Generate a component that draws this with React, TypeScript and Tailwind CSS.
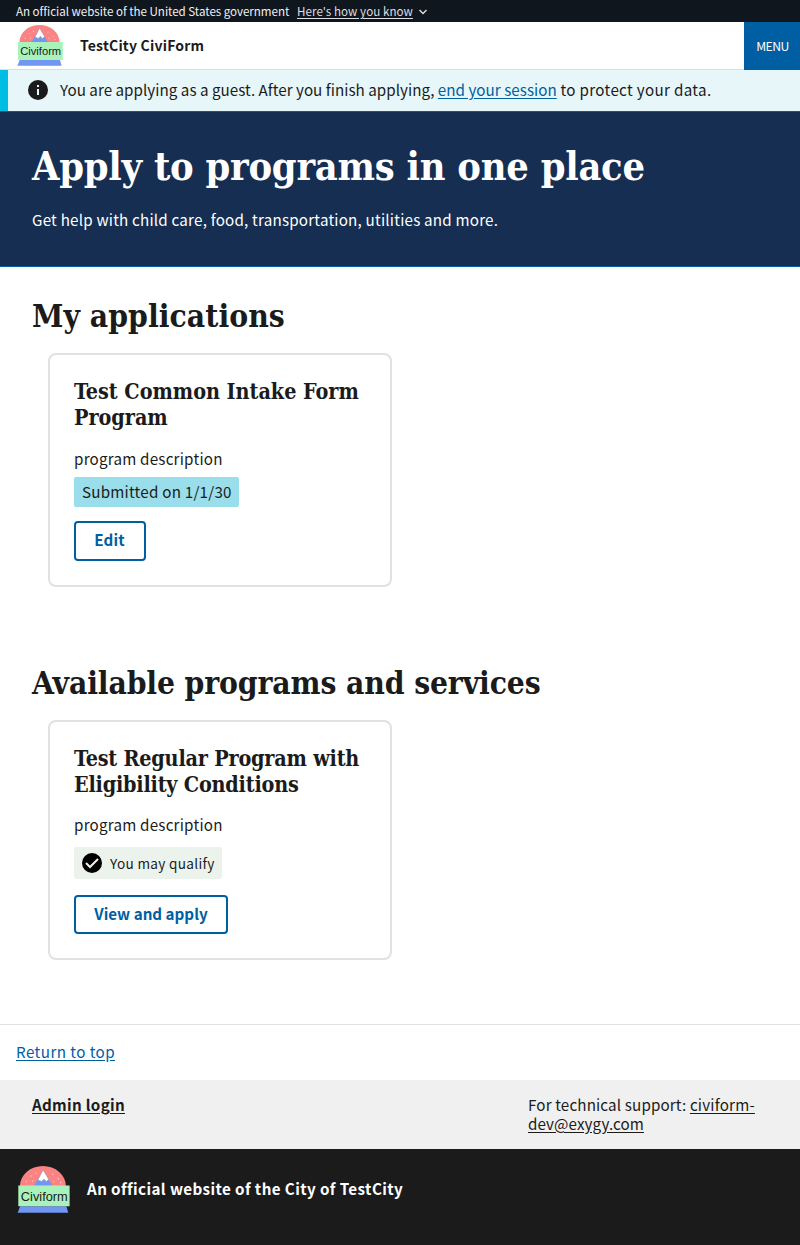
import React from "react";

type LogoProps = { className: string };

function Logo({ className }: LogoProps) {
  return (
    <svg className={className} viewBox="0 0 48 44" role="img" aria-label="Civiform">
      <path d="M3.4 18.5A20 17.5 0 0 1 43.6 18.5Z" fill="#fb8383" />
      <path d="M15.5 18.2 23.6 4.8l8.2 13.4Z" fill="#7297f2" />
      <path d="m23.6 4.3 4.9 8.2-2 1.9-2.3-2.1-1.7 2.2-2-.9-1.4-.6Z" fill="#fff" stroke="#9a8a9a" strokeWidth=".4" />
      <g fill="#fdd3d3">
        <circle cx="13" cy="9.5" r=".6" />
        <circle cx="17.5" cy="7.3" r=".6" />
        <circle cx="9" cy="14.5" r=".6" />
        <circle cx="14.5" cy="14" r=".6" />
        <circle cx="32" cy="8" r=".6" />
        <circle cx="37" cy="12" r=".6" />
        <circle cx="33" cy="14.5" r=".6" />
        <circle cx="39" cy="15.5" r=".6" />
      </g>
      <path d="M3.6 36h40.4l1.6 5.7H1.4Z" fill="#7297f2" />
      <path d="M2 18h44.8v18H2Z" fill="#a9f3bb" />
      <text x="4.2" y="31.3" fontFamily="'Liberation Sans', sans-serif" fontSize="11" textLength="41" lengthAdjust="spacingAndGlyphs" fill="#1b1b1b">
        Civiform
      </text>
    </svg>
  );
}

type CardProps = {
  title: string[];
  children: React.ReactNode;
  className: string;
  titleClass: string;
  descriptionClass: string;
};

function ProgramCard({ title, children, className, titleClass, descriptionClass }: CardProps) {
  return (
    <article className={`ml-4 w-[344px] rounded-lg border-2 border-[#dfe1e2] px-6 ${className}`}>
      <h3 className={`pt-6 font-['DejaVu_Serif_Condensed','DejaVu_Serif',serif] text-[21.4px] font-bold leading-[26px] whitespace-nowrap ${titleClass}`}>
        {title.map((line) => (
          <span key={line} className="block">{line}</span>
        ))}
      </h3>
      <p className={`leading-6 tracking-[0.21px] ${descriptionClass}`}>program description</p>
      {children}
    </article>
  );
}

export default function App() {
  return (
    <div className="flex h-[1245px] w-[800px] flex-col bg-white font-['Noto_Sans_CJK_SC',sans-serif] text-[15.2px] text-[#1b1b1b]">
      <div className="flex h-[22px] shrink-0 items-center bg-[#10161d] pl-4 text-[11.6px] leading-[22px] whitespace-nowrap text-[#f0f0f0]">
        <span className="w-[281px] tracking-[-0.035px]">An official website of the United States government</span>
        <a className="tracking-[0.05px] text-[#dcdee0] underline underline-offset-2">Here's how you know</a>
        <svg className="ml-1.5 mt-0.5 h-2 w-2" viewBox="0 0 8 8" fill="none" stroke="#dcdee0" strokeWidth="1.5">
          <path d="m.5 2 3.5 3.5L7.5 2" />
        </svg>
      </div>
      <header className="flex h-12 shrink-0 items-stretch">
        <div className="flex grow items-center border-b border-[#dcdee0] pl-4">
          <Logo className="mt-px h-11 w-12" />
          <span className="mb-0.5 ml-4 text-[14px] font-bold leading-6 tracking-[0.2px]">TestCity CiviForm</span>
        </div>
        <button className="w-14 bg-[#005ea2] pl-px text-[12.2px] leading-6 tracking-[-0.5px] text-white">MENU</button>
      </header>
      <section className="flex h-[41px] shrink-0 items-center border-l-8 border-[#00bde3] bg-[#e7f6f8] pl-5 whitespace-nowrap">
        <svg className="mb-px h-5 w-5" viewBox="0 0 20 20">
          <circle cx="10" cy="10" r="10" fill="#1b1b1b" />
          <path d="M9 5h2v2H9zM9 9h2v6H9z" fill="#e7f6f8" />
        </svg>
        <p className="mb-[3px] ml-3 leading-6">
          <span className="tracking-[0.03px]">You are applying as a guest. After you finish applying, </span>
          <a className="tracking-[0.03px] text-[#005ea2] underline underline-offset-2">end your session</a>
          <span className="tracking-[0.32px]"> to protect your data.</span>
        </p>
      </section>
      <section className="h-[156px] shrink-0 border-y border-[#005ea2] bg-[#162e51] px-8 text-white">
        <h1 className="pt-[30px] font-['DejaVu_Serif_Condensed','DejaVu_Serif',serif] text-[39.4px] font-bold leading-[48px] tracking-[-0.25px] whitespace-nowrap">
          Apply to programs in one place
        </h1>
        <p className="mt-[17px] leading-6 tracking-[0.2px]">Get help with child care, food, transportation, utilities and more.</p>
      </section>
      <main className="flex h-[757px] shrink-0 flex-col px-8">
        <h2 className="mt-[29px] font-['DejaVu_Serif_Condensed','DejaVu_Serif',serif] text-[31.5px] font-bold leading-[40px] tracking-[0.04px]">My applications</h2>
        <ProgramCard title={["Test Common Intake Form", "Program"]} className="mt-[17px] h-[234px]" titleClass="tracking-[-0.03px]" descriptionClass="mt-[15px]">
          <p className="mt-[7px] flex h-[30px] w-[165px] items-center rounded-xs bg-[#99deea] px-2 pb-0.5 leading-6 tracking-[0.22px] whitespace-nowrap">Submitted on 1/1/30</p>
          <button className="mt-[14px] block h-10 w-[72px] rounded-sm border-2 border-[#005ea2] pr-px pb-1 font-bold leading-6 tracking-[0.15px] text-[#005ea2]">Edit</button>
        </ProgramCard>
        <h2 className="mt-[76px] font-['DejaVu_Serif_Condensed','DejaVu_Serif',serif] text-[31.5px] font-bold leading-[40px] tracking-[-0.13px]">Available programs and services</h2>
        <ProgramCard title={["Test Regular Program with", "Eligibility Conditions"]} className="mt-[17px] h-[240px]" titleClass="tracking-[-0.2px]" descriptionClass="mt-[14px]">
          <p className="mt-[11px] flex h-8 w-[148px] items-center rounded-xs bg-[#ecf3ec] pl-2 text-[13.6px] leading-6 tracking-[0.32px] whitespace-nowrap">
            <svg className="mr-2 h-5 w-5" viewBox="0 0 20 20">
              <circle cx="10" cy="10" r="10" fill="#000" />
              <path d="m4 10 4 4 8-8" fill="none" stroke="#ecf3ec" strokeWidth="2" />
            </svg>
            <span className="pb-px">You may qualify</span>
          </p>
          <button className="mt-[16px] block h-[39px] w-[154px] rounded-sm border-2 border-[#005ea2] pb-1 font-bold leading-6 text-[#005ea2]">View and apply</button>
        </ProgramCard>
      </main>
      <footer className="flex shrink-0 flex-col">
        <div className="h-14 border-t border-[#dfe1e2] pl-4 pt-[14px]">
          <a className="leading-6 tracking-[0.43px] text-[#005ea2] underline underline-offset-2">Return to top</a>
        </div>
        <div className="flex h-[69px] justify-between bg-[#f0f0f0] pl-8 pt-[15px] leading-[19px]">
          <a className="font-bold tracking-[0.3px] underline underline-offset-2">Admin login</a>
          <p className="w-[272px] whitespace-nowrap">
            <span className="tracking-[0.14px]">For technical support: </span>
            <a className="underline underline-offset-2"><span className="tracking-[0.2px]">civiform-</span><br /><span className="tracking-[0.09px]">dev@exygy.com</span></a>
          </p>
        </div>
        <div className="flex h-24 items-start bg-[#1b1b1b] pl-4 pt-[15px] text-white">
          <Logo className="mt-px h-[50.4px] w-[55px]" />
          <span className="ml-4 mt-3 font-bold leading-6 tracking-[0.4px]">An official website of the City of TestCity</span>
        </div>
      </footer>
    </div>
  );
}
